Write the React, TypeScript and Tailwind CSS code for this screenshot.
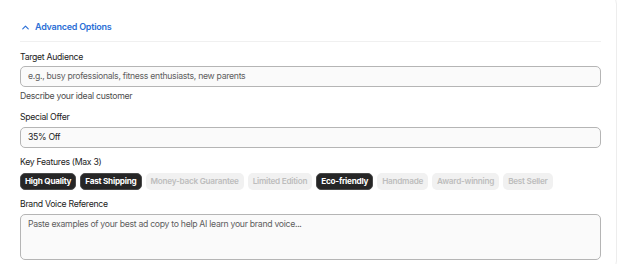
import { ChevronUp } from "lucide-react";

const features = [
  { name: "High Quality", on: true },
  { name: "Fast Shipping", on: true },
  { name: "Money-back Guarantee", on: false },
  { name: "Limited Edition", on: false },
  { name: "Eco-friendly", on: true },
  { name: "Handmade", on: false },
  { name: "Award-winning", on: false },
  { name: "Best Seller", on: false },
];

export default function App() {
  return (
    <div className="h-[264px] w-[620px] overflow-hidden bg-white font-['Inter',sans-serif]">
      <div className="-mt-[12px] ml-[-8px] mr-[3px] rounded-2xl border border-[#ededed] bg-white pl-[27px] pr-[15px] pt-[31px] pb-4">
        {/* Toggle */}
        <button className="flex items-center gap-[4px] text-[9px] leading-[14px] font-semibold tracking-[-0.25px] text-[#2b6fd6]">
          <ChevronUp size={11} strokeWidth={2.5} />
          Advanced Options
        </button>
        <div className="mt-[7px] h-px bg-[#f0f0f0]" />

        {/* Target audience */}
        <div className="mt-[9px] text-[8.7px] leading-[12px] tracking-[-0.3px] text-[#222]">Target Audience</div>
        <div className="mt-[3px] flex h-[21px] items-center rounded-[5px] border border-[#b5b5b5] bg-[#fafafa] px-[7px] text-[8.7px] tracking-[-0.3px] text-[#5e5e5e]">
          e.g., busy professionals, fitness enthusiasts, new parents
        </div>
        <div className="mt-[3px] text-[8.7px] leading-[12px] tracking-[-0.3px] text-[#4d4d4d]">Describe your ideal customer</div>

        {/* Special offer */}
        <div className="mt-[9px] text-[8.7px] leading-[12px] tracking-[-0.3px] text-[#222]">Special Offer</div>
        <div className="mt-[4px] flex h-[21px] items-center rounded-[5px] border border-[#b5b5b5] bg-[#fafafa] px-[7px] text-[8.7px] tracking-[-0.3px] text-[#1a1a1a]">
          35% Off
        </div>

        {/* Key features */}
        <div className="mt-[8px] text-[8.7px] leading-[12px] tracking-[-0.3px] text-[#222]">Key Features (Max 3)</div>
        <div className="mt-[5px] flex gap-[4px]">
          {features.map((f) =>
            f.on ? (
              <span
                key={f.name}
                className="flex h-[17px] items-center rounded-[5px] border border-[#4a4a4a] bg-[#262626] px-[4px] text-[8.2px] font-bold tracking-[-0.25px] text-white"
              >
                {f.name}
              </span>
            ) : (
              <span
                key={f.name}
                className="flex h-[17px] items-center rounded-[5px] bg-[#f1f1f1] px-[5px] text-[8.2px] font-semibold tracking-[-0.25px] text-[#bdbdbd]"
              >
                {f.name}
              </span>
            )
          )}
        </div>

        {/* Brand voice */}
        <div className="mt-[8px] text-[8.7px] leading-[12px] tracking-[-0.3px] text-[#222]">Brand Voice Reference</div>
        <div className="mt-[4px] h-[46px] rounded-[5px] border border-[#b5b5b5] bg-[#fafafa] px-[7px] pt-[3px] text-[8.7px] leading-[12px] tracking-[-0.3px] text-[#5e5e5e]">
          Paste examples of your best ad copy to help AI learn your brand voice...
        </div>
      </div>
    </div>
  );
}
